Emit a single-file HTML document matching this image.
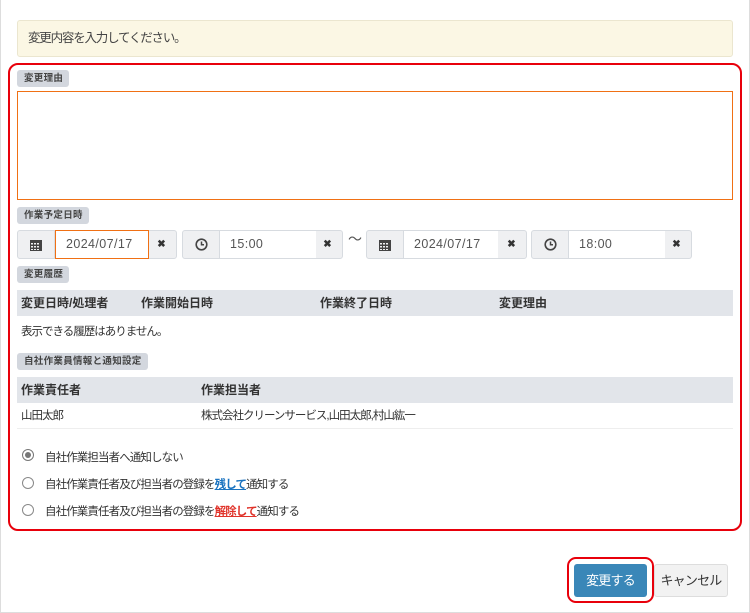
<!DOCTYPE html>
<html><head><meta charset="utf-8"><style>
*{box-sizing:border-box;margin:0;padding:0}
body{width:750px;height:613px;background:#fff;font-family:"Liberation Sans","Noto Sans CJK JP",sans-serif;color:#333;font-size:12px;position:relative;overflow:hidden}
.a{position:absolute}
.frame{left:0;top:0;width:750px;height:613px;border:1px solid #ddd;border-top:none}
.alert{left:17px;top:20px;width:716px;height:37px;background:#fbf7e4;border:1px solid #ebe6cf;border-radius:3px;padding:0 10px;line-height:35px;font-size:12.5px;color:#444;letter-spacing:-1.2px}
.red{left:8px;top:63px;width:734px;height:468px;border:2px solid #e8000b;border-radius:10px}
.lbl{background:#d3d7de;border-radius:3px;font-size:9.5px;font-weight:bold;color:#444;height:17px;line-height:17px;padding:0 6px 0 7px;letter-spacing:0.3px}
.ta{left:17px;top:91px;width:716px;height:109px;border:1px solid #f07014}
.grp{top:230px;height:29px;background:#eff0f2;border:1px solid #d7dbe0;border-radius:3px}
.ad{position:absolute;top:0;width:37px;height:27px;display:flex;align-items:center;justify-content:center;border-right:1px solid #d7dbe0}
.in{position:absolute;top:-1px;height:29px;background:#fff;border-top:1px solid #d7dbe0;border-bottom:1px solid #d7dbe0;line-height:27px;padding-left:10px;font-size:12.5px;color:#555;letter-spacing:0.4px}
.x{position:absolute;top:0;right:0;width:29px;height:27px;text-align:center;line-height:27px;font-size:10px;font-weight:bold;color:#333}
.th{left:17px;width:716px;height:26px;background:#e2e5ea;font-weight:bold;line-height:26px;font-size:12px}
.th span,.tr span{position:absolute}
.tr{left:17px;width:716px;height:26px;line-height:26px;border-bottom:1px solid #eee;font-size:11.5px;letter-spacing:-1px}
.rad{left:22px;width:12px;height:12px;border:1px solid #888;border-radius:50%;background:#fff}
.rt{left:45px;font-size:11.5px;color:#333;letter-spacing:-0.9px}
.btn{height:33px;border-radius:3px;line-height:33px;text-align:center;font-size:13px;letter-spacing:-0.8px}
</style></head><body>
<div class="a frame"></div>
<div class="a alert">変更内容を入力してください。</div>
<div class="a red"></div>
<div class="a lbl" style="left:17px;top:70px">変更理由</div>
<div class="a ta"></div>
<div class="a lbl" style="left:17px;top:207px">作業予定日時</div>

<div class="a grp" style="left:17px;width:160px">
 <div class="ad" style="left:0"><svg width="12" height="12" viewBox="0 0 12 12"><rect x="0" y="1" width="12" height="11" fill="#444"/><g fill="#eff0f2"><rect x="1" y="4" width="2" height="1.5"/><rect x="4" y="4" width="2" height="1.5"/><rect x="7" y="4" width="2" height="1.5"/><rect x="1" y="7" width="2" height="1.5"/><rect x="4" y="7" width="2" height="1.5"/><rect x="7" y="7" width="2" height="1.5"/><rect x="1" y="10" width="2" height="1"/><rect x="4" y="10" width="2" height="1"/><rect x="7" y="10" width="2" height="1"/></g></svg></div>
 <div class="in" style="left:37px;width:94px;border:1px solid #f07014">2024/07/17</div>
 <div class="x">✖</div>
</div>
<div class="a grp" style="left:182px;width:161px">
 <div class="ad" style="left:0"><svg width="13" height="13" viewBox="0 0 13 13"><circle cx="6.5" cy="6.5" r="5.3" fill="none" stroke="#444" stroke-width="1.6"/><path d="M6.5 3.5V6.8H9" fill="none" stroke="#444" stroke-width="1.5"/></svg></div>
 <div class="in" style="left:37px;width:96px">15:00</div>
 <div class="x">✖</div>
</div>
<div class="a" style="left:348px;top:229px;font-size:14px;color:#555">～</div>
<div class="a grp" style="left:366px;width:161px">
 <div class="ad" style="left:0"><svg width="12" height="12" viewBox="0 0 12 12"><rect x="0" y="1" width="12" height="11" fill="#444"/><g fill="#eff0f2"><rect x="1" y="4" width="2" height="1.5"/><rect x="4" y="4" width="2" height="1.5"/><rect x="7" y="4" width="2" height="1.5"/><rect x="1" y="7" width="2" height="1.5"/><rect x="4" y="7" width="2" height="1.5"/><rect x="7" y="7" width="2" height="1.5"/><rect x="1" y="10" width="2" height="1"/><rect x="4" y="10" width="2" height="1"/><rect x="7" y="10" width="2" height="1"/></g></svg></div>
 <div class="in" style="left:37px;width:94px">2024/07/17</div>
 <div class="x">✖</div>
</div>
<div class="a grp" style="left:531px;width:161px">
 <div class="ad" style="left:0"><svg width="13" height="13" viewBox="0 0 13 13"><circle cx="6.5" cy="6.5" r="5.3" fill="none" stroke="#444" stroke-width="1.6"/><path d="M6.5 3.5V6.8H9" fill="none" stroke="#444" stroke-width="1.5"/></svg></div>
 <div class="in" style="left:37px;width:96px">18:00</div>
 <div class="x">✖</div>
</div>

<div class="a lbl" style="left:17px;top:266px">変更履歴</div>
<div class="a th" style="top:290px"><span style="left:4px">変更日時/処理者</span><span style="left:124px">作業開始日時</span><span style="left:303px">作業終了日時</span><span style="left:482px">変更理由</span></div>
<div class="a" style="left:21px;top:323px;font-size:11.5px;letter-spacing:-1px">表示できる履歴はありません。</div>

<div class="a lbl" style="left:17px;top:353px">自社作業員情報と通知設定</div>
<div class="a th" style="top:377px"><span style="left:4px">作業責任者</span><span style="left:184px">作業担当者</span></div>
<div class="a tr" style="top:403px"><span style="left:4px">山田太郎</span><span style="left:184px">株式会社クリーンサービス,山田太郎,村山紘一</span></div>

<div class="a rad" style="top:449px;border-color:#777"><div style="position:absolute;left:2px;top:2px;width:6px;height:6px;border-radius:50%;background:#777"></div></div>
<div class="a rt" style="top:449px">自社作業担当者へ通知しない</div>
<div class="a rad" style="top:477px"></div>
<div class="a rt" style="top:476px">自社作業責任者及び担当者の登録を<span style="color:#1a73c0;text-decoration:underline;font-weight:bold">残して</span>通知する</div>
<div class="a rad" style="top:504px"></div>
<div class="a rt" style="top:503px">自社作業責任者及び担当者の登録を<span style="color:#e0332a;text-decoration:underline;font-weight:bold">解除して</span>通知する</div>

<div class="a" style="left:567px;top:557px;width:87px;height:46px;border:2px solid #e8000b;border-radius:9px"></div>
<div class="a btn" style="left:574px;top:564px;width:73px;background:#3a87b8;color:#fff">変更する</div>
<div class="a btn" style="left:654px;top:564px;width:74px;background:#f2f2f2;border:1px solid #ddd;color:#333;line-height:31px">キャンセル</div>
</body></html>
